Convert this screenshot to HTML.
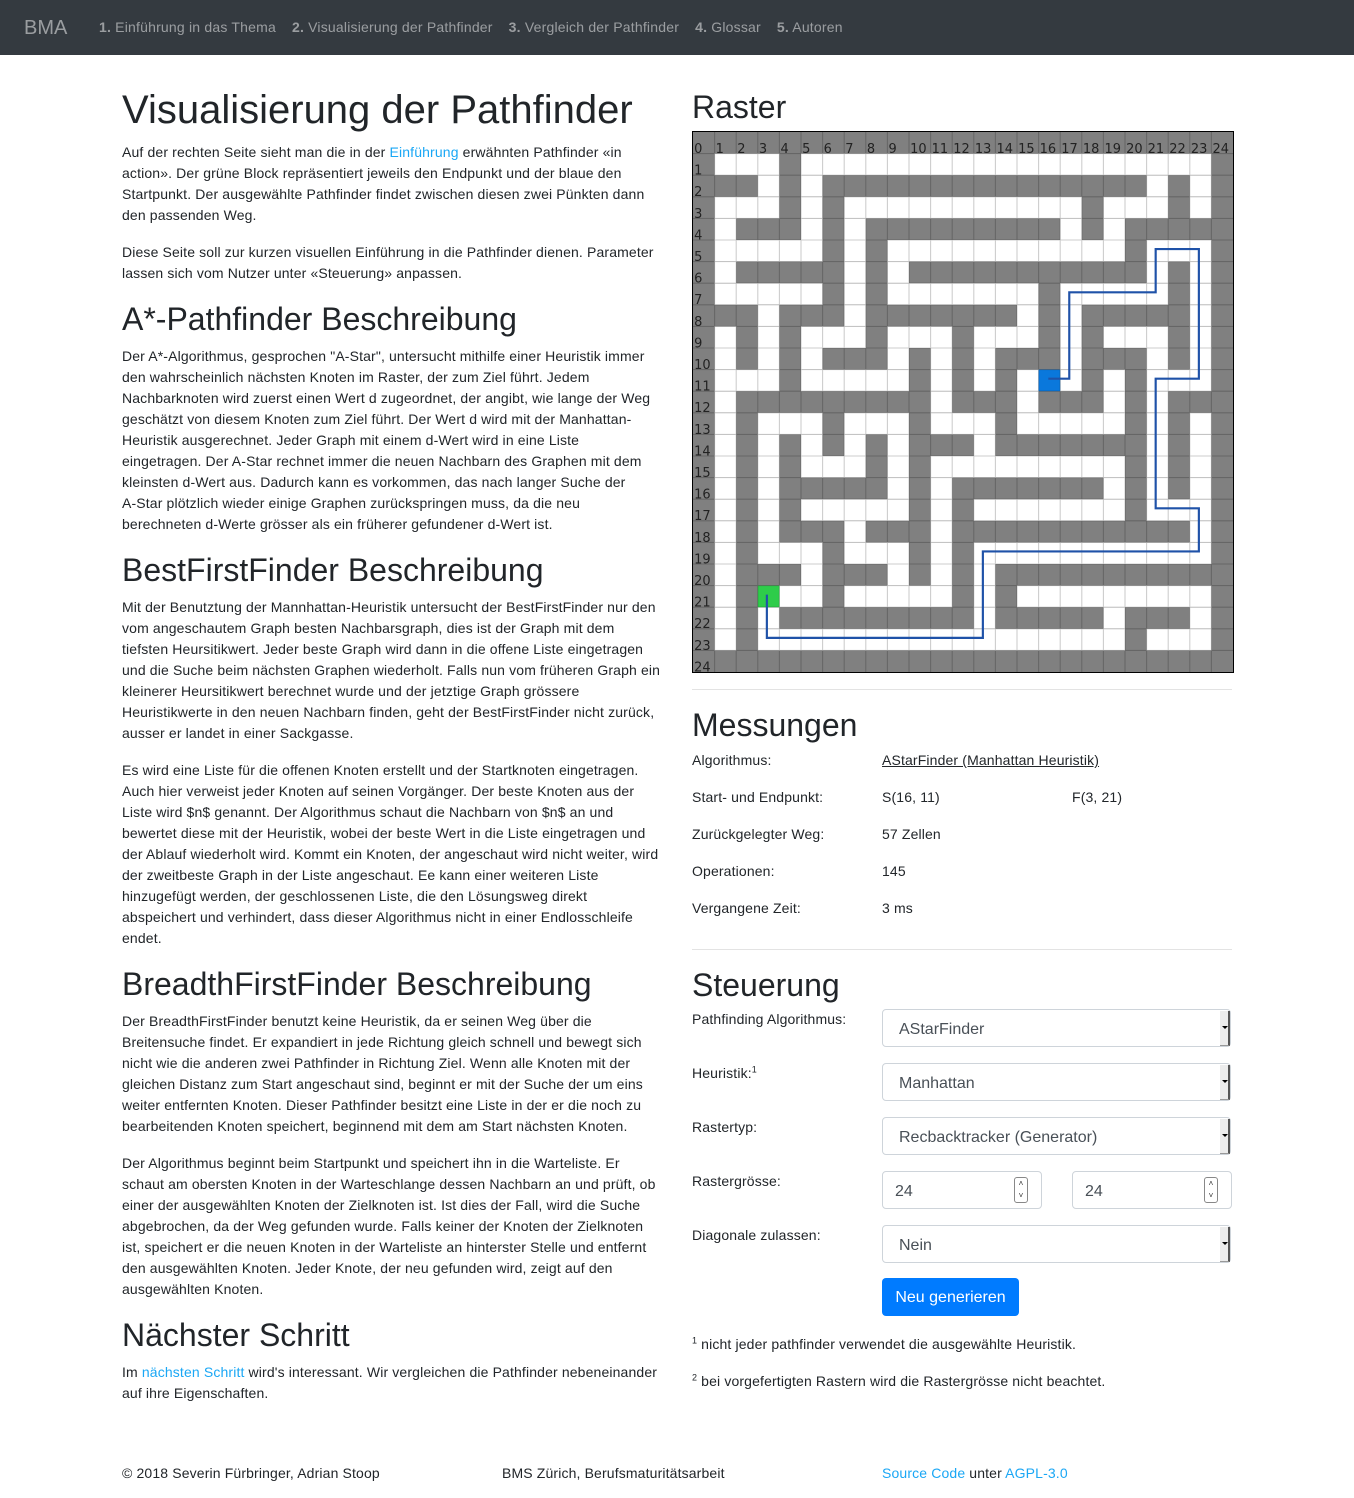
<!DOCTYPE html>
<html><head><meta charset="utf-8">
<style>
*{box-sizing:border-box}
body{margin:0;width:1354px;height:1498px;position:relative;font-family:"Liberation Sans",Arial,sans-serif;font-size:14px;line-height:21px;color:#212529;background:#fff;overflow:hidden}
a{color:#1aa7f5;text-decoration:none}
.nav{position:absolute;left:0;top:0;width:1354px;height:55px;background:#343a40}
.brand{position:absolute;left:24px;top:14px;font-size:20px;line-height:28px;color:rgba(255,255,255,.5)}
.links{position:absolute;left:91px;top:17px;color:rgba(255,255,255,.5);font-size:14px;white-space:nowrap;letter-spacing:0.2px}
.links span{padding:0 8px}
.left{position:absolute;left:122px;top:86px;width:560px}
h1{font-size:40px;line-height:48px;font-weight:400;margin:0 0 8px}
h2{font-size:32px;line-height:38px;font-weight:400;margin:0 0 8px}
p{margin:0 0 16px;white-space:nowrap;letter-spacing:0.14px}
.abs{position:absolute}
.hr{position:absolute;left:692px;width:540px;height:1px;background:#e3e3e3}
.sel{position:absolute;left:882px;width:349px;height:38px;border:1px solid #ced4da;border-radius:4px;font-size:16px;line-height:36px;padding-left:16px;padding-top:2px;color:#495057}
.sel:after{content:"";position:absolute;right:0;top:1px;width:8px;height:34px;background:#ececec;border-right:2px solid #555;border-bottom:1px solid #999}
.sel:before{content:"";position:absolute;right:2px;top:16px;border-left:3px solid transparent;border-right:3px solid transparent;border-top:3px solid #000;z-index:2}
.num{position:absolute;width:160px;height:38px;border:1px solid #ced4da;border-radius:4px;font-size:16px;line-height:36px;padding-left:12px;padding-top:2px;color:#495057}
.spin{position:absolute;right:13px;top:5px;width:14px;height:26px;border:1px solid #888;border-radius:3px;font-size:8px;line-height:12px;text-align:center;color:#333}
.lab{position:absolute;left:692px;letter-spacing:0.14px}
.r{letter-spacing:0.14px}
</style></head><body>
<div class="nav"><div class="brand">BMA</div>
<div class="links"><span><b>1.</b> Einführung in das Thema</span><span><b>2.</b> Visualisierung der Pathfinder</span><span><b>3.</b> Vergleich der Pathfinder</span><span><b>4.</b> Glossar</span><span><b>5.</b> Autoren</span></div></div>

<div class="left">
<h1>Visualisierung der Pathfinder</h1>
<p>Auf der rechten Seite sieht man die in der <a>Einführung</a> erwähnten Pathfinder «in<br>action». Der grüne Block repräsentiert jeweils den Endpunkt und der blaue den<br>Startpunkt. Der ausgewählte Pathfinder findet zwischen diesen zwei Pünkten dann<br>den passenden Weg.</p>
<p>Diese Seite soll zur kurzen visuellen Einführung in die Pathfinder dienen. Parameter<br>lassen sich vom Nutzer unter «Steuerung» anpassen.</p>
<h2>A*-Pathfinder Beschreibung</h2>
<p>Der A*-Algorithmus, gesprochen "A-Star", untersucht mithilfe einer Heuristik immer<br>den wahrscheinlich nächsten Knoten im Raster, der zum Ziel führt. Jedem<br>Nachbarknoten wird zuerst einen Wert d zugeordnet, der angibt, wie lange der Weg<br>geschätzt von diesem Knoten zum Ziel führt. Der Wert d wird mit der Manhattan-<br>Heuristik ausgerechnet. Jeder Graph mit einem d-Wert wird in eine Liste<br>eingetragen. Der A-Star rechnet immer die neuen Nachbarn des Graphen mit dem<br>kleinsten d-Wert aus. Dadurch kann es vorkommen, das nach langer Suche der<br>A-Star plötzlich wieder einige Graphen zurückspringen muss, da die neu<br>berechneten d-Werte grösser als ein früherer gefundener d-Wert ist.</p>
<h2>BestFirstFinder Beschreibung</h2>
<p>Mit der Benutztung der Mannhattan-Heuristik untersucht der BestFirstFinder nur den<br>vom angeschautem Graph besten Nachbarsgraph, dies ist der Graph mit dem<br>tiefsten Heursitikwert. Jeder beste Graph wird dann in die offene Liste eingetragen<br>und die Suche beim nächsten Graphen wiederholt. Falls nun vom früheren Graph ein<br>kleinerer Heursitikwert berechnet wurde und der jetztige Graph grössere<br>Heuristikwerte in den neuen Nachbarn finden, geht der BestFirstFinder nicht zurück,<br>ausser er landet in einer Sackgasse.</p>
<p>Es wird eine Liste für die offenen Knoten erstellt und der Startknoten eingetragen.<br>Auch hier verweist jeder Knoten auf seinen Vorgänger. Der beste Knoten aus der<br>Liste wird $n$ genannt. Der Algorithmus schaut die Nachbarn von $n$ an und<br>bewertet diese mit der Heuristik, wobei der beste Wert in die Liste eingetragen und<br>der Ablauf wiederholt wird. Kommt ein Knoten, der angeschaut wird nicht weiter, wird<br>der zweitbeste Graph in der Liste angeschaut. Ee kann einer weiteren Liste<br>hinzugefügt werden, der geschlossenen Liste, die den Lösungsweg direkt<br>abspeichert und verhindert, dass dieser Algorithmus nicht in einer Endlosschleife<br>endet.</p>
<h2>BreadthFirstFinder Beschreibung</h2>
<p>Der BreadthFirstFinder benutzt keine Heuristik, da er seinen Weg über die<br>Breitensuche findet. Er expandiert in jede Richtung gleich schnell und bewegt sich<br>nicht wie die anderen zwei Pathfinder in Richtung Ziel. Wenn alle Knoten mit der<br>gleichen Distanz zum Start angeschaut sind, beginnt er mit der Suche der um eins<br>weiter entfernten Knoten. Dieser Pathfinder besitzt eine Liste in der er die noch zu<br>bearbeitenden Knoten speichert, beginnend mit dem am Start nächsten Knoten.</p>
<p>Der Algorithmus beginnt beim Startpunkt und speichert ihn in die Warteliste. Er<br>schaut am obersten Knoten in der Warteschlange dessen Nachbarn an und prüft, ob<br>einer der ausgewählten Knoten der Zielknoten ist. Ist dies der Fall, wird die Suche<br>abgebrochen, da der Weg gefunden wurde. Falls keiner der Knoten der Zielknoten<br>ist, speichert er die neuen Knoten in der Warteliste an hinterster Stelle und entfernt<br>den ausgewählten Knoten. Jeder Knote, der neu gefunden wird, zeigt auf den<br>ausgewählten Knoten.</p>
<h2>Nächster Schritt</h2>
<p>Im <a>nächsten Schritt</a> wird's interessant. Wir vergleichen die Pathfinder nebeneinander<br>auf ihre Eigenschaften.</p>
</div>

<h2 class="abs" style="left:692px;top:88px">Raster</h2>
<div class="abs" style="left:692px;top:131px;width:542px;height:542px;border:1px solid #000">
<svg width="540" height="540" viewBox="0 0 25 25" style="display:block">
<rect x="0" y="0" width="25" height="25" fill="#808080"/>
<g fill="#fff">
<rect x="1" y="1" width="3" height="1"/><rect x="5" y="1" width="19" height="1"/>
<rect x="3" y="2" width="1" height="1"/><rect x="5" y="2" width="1" height="1"/><rect x="21" y="2" width="1" height="1"/><rect x="23" y="2" width="1" height="1"/>
<rect x="1" y="3" width="3" height="1"/><rect x="5" y="3" width="1" height="1"/><rect x="7" y="3" width="11" height="1"/><rect x="19" y="3" width="3" height="1"/><rect x="23" y="3" width="1" height="1"/>
<rect x="1" y="4" width="1" height="1"/><rect x="5" y="4" width="1" height="1"/><rect x="7" y="4" width="1" height="1"/><rect x="17" y="4" width="1" height="1"/><rect x="19" y="4" width="1" height="1"/>
<rect x="1" y="5" width="5" height="1"/><rect x="7" y="5" width="1" height="1"/><rect x="9" y="5" width="11" height="1"/><rect x="21" y="5" width="3" height="1"/>
<rect x="1" y="6" width="1" height="1"/><rect x="7" y="6" width="1" height="1"/><rect x="9" y="6" width="1" height="1"/><rect x="21" y="6" width="1" height="1"/><rect x="23" y="6" width="1" height="1"/>
<rect x="1" y="7" width="5" height="1"/><rect x="7" y="7" width="1" height="1"/><rect x="9" y="7" width="7" height="1"/><rect x="17" y="7" width="5" height="1"/><rect x="23" y="7" width="1" height="1"/>
<rect x="3" y="8" width="1" height="1"/><rect x="7" y="8" width="1" height="1"/><rect x="15" y="8" width="1" height="1"/><rect x="17" y="8" width="1" height="1"/><rect x="23" y="8" width="1" height="1"/>
<rect x="1" y="9" width="1" height="1"/><rect x="3" y="9" width="1" height="1"/><rect x="5" y="9" width="3" height="1"/><rect x="9" y="9" width="3" height="1"/><rect x="13" y="9" width="3" height="1"/><rect x="17" y="9" width="1" height="1"/><rect x="19" y="9" width="3" height="1"/><rect x="23" y="9" width="1" height="1"/>
<rect x="1" y="10" width="1" height="1"/><rect x="3" y="10" width="1" height="1"/><rect x="5" y="10" width="1" height="1"/><rect x="9" y="10" width="1" height="1"/><rect x="11" y="10" width="1" height="1"/><rect x="13" y="10" width="1" height="1"/><rect x="17" y="10" width="1" height="1"/><rect x="21" y="10" width="1" height="1"/><rect x="23" y="10" width="1" height="1"/>
<rect x="1" y="11" width="3" height="1"/><rect x="5" y="11" width="5" height="1"/><rect x="11" y="11" width="1" height="1"/><rect x="13" y="11" width="1" height="1"/><rect x="15" y="11" width="1" height="1"/><rect x="17" y="11" width="1" height="1"/><rect x="19" y="11" width="1" height="1"/><rect x="21" y="11" width="3" height="1"/>
<rect x="1" y="12" width="1" height="1"/><rect x="11" y="12" width="1" height="1"/><rect x="15" y="12" width="1" height="1"/><rect x="19" y="12" width="1" height="1"/><rect x="21" y="12" width="1" height="1"/>
<rect x="1" y="13" width="1" height="1"/><rect x="3" y="13" width="3" height="1"/><rect x="7" y="13" width="3" height="1"/><rect x="11" y="13" width="3" height="1"/><rect x="15" y="13" width="5" height="1"/><rect x="21" y="13" width="1" height="1"/><rect x="23" y="13" width="1" height="1"/>
<rect x="1" y="14" width="1" height="1"/><rect x="3" y="14" width="1" height="1"/><rect x="5" y="14" width="1" height="1"/><rect x="7" y="14" width="1" height="1"/><rect x="9" y="14" width="1" height="1"/><rect x="13" y="14" width="1" height="1"/><rect x="21" y="14" width="1" height="1"/><rect x="23" y="14" width="1" height="1"/>
<rect x="1" y="15" width="1" height="1"/><rect x="3" y="15" width="1" height="1"/><rect x="5" y="15" width="3" height="1"/><rect x="9" y="15" width="1" height="1"/><rect x="11" y="15" width="9" height="1"/><rect x="21" y="15" width="1" height="1"/><rect x="23" y="15" width="1" height="1"/>
<rect x="1" y="16" width="1" height="1"/><rect x="3" y="16" width="1" height="1"/><rect x="9" y="16" width="1" height="1"/><rect x="11" y="16" width="1" height="1"/><rect x="19" y="16" width="1" height="1"/><rect x="21" y="16" width="1" height="1"/><rect x="23" y="16" width="1" height="1"/>
<rect x="1" y="17" width="1" height="1"/><rect x="3" y="17" width="1" height="1"/><rect x="5" y="17" width="5" height="1"/><rect x="11" y="17" width="1" height="1"/><rect x="13" y="17" width="7" height="1"/><rect x="21" y="17" width="3" height="1"/>
<rect x="1" y="18" width="1" height="1"/><rect x="3" y="18" width="1" height="1"/><rect x="7" y="18" width="1" height="1"/><rect x="11" y="18" width="1" height="1"/><rect x="23" y="18" width="1" height="1"/>
<rect x="1" y="19" width="1" height="1"/><rect x="3" y="19" width="3" height="1"/><rect x="7" y="19" width="3" height="1"/><rect x="11" y="19" width="1" height="1"/><rect x="13" y="19" width="11" height="1"/>
<rect x="1" y="20" width="1" height="1"/><rect x="5" y="20" width="1" height="1"/><rect x="9" y="20" width="1" height="1"/><rect x="11" y="20" width="1" height="1"/><rect x="13" y="20" width="1" height="1"/>
<rect x="1" y="21" width="1" height="1"/><rect x="4" y="21" width="2" height="1"/><rect x="7" y="21" width="5" height="1"/><rect x="13" y="21" width="1" height="1"/><rect x="15" y="21" width="9" height="1"/>
<rect x="1" y="22" width="1" height="1"/><rect x="3" y="22" width="1" height="1"/><rect x="13" y="22" width="1" height="1"/><rect x="19" y="22" width="1" height="1"/><rect x="23" y="22" width="1" height="1"/>
<rect x="1" y="23" width="1" height="1"/><rect x="3" y="23" width="17" height="1"/><rect x="21" y="23" width="3" height="1"/>
</g>
<rect x="16" y="11" width="1" height="1" fill="#0a78dc"/>
<rect x="3" y="21" width="1" height="1" fill="#2ecc4a"/>
<path stroke="rgba(0,0,0,0.2)" stroke-width="0.05" fill="none" d="M1 0V25M2 0V25M3 0V25M4 0V25M5 0V25M6 0V25M7 0V25M8 0V25M9 0V25M10 0V25M11 0V25M12 0V25M13 0V25M14 0V25M15 0V25M16 0V25M17 0V25M18 0V25M19 0V25M20 0V25M21 0V25M22 0V25M23 0V25M24 0V25M0 1H25M0 2H25M0 3H25M0 4H25M0 5H25M0 6H25M0 7H25M0 8H25M0 9H25M0 10H25M0 11H25M0 12H25M0 13H25M0 14H25M0 15H25M0 16H25M0 17H25M0 18H25M0 19H25M0 20H25M0 21H25M0 22H25M0 23H25M0 24H25"/>
<polyline fill="none" stroke="#1f52a8" stroke-width="0.1" points="16.45,11.42 17.42,11.42 17.42,7.42 21.42,7.42 21.42,5.42 23.42,5.42 23.42,11.42 21.42,11.42 21.42,17.42 23.42,17.42 23.42,19.42 13.42,19.42 13.42,23.42 3.42,23.42 3.42,21.42"/>
<g font-family="DejaVu Sans,sans-serif" font-size="0.6" fill="#222">
<text x="0.05" y="0.97">0</text><text x="1.05" y="0.97">1</text><text x="2.05" y="0.97">2</text><text x="3.05" y="0.97">3</text><text x="4.05" y="0.97">4</text><text x="5.05" y="0.97">5</text><text x="6.05" y="0.97">6</text><text x="7.05" y="0.97">7</text><text x="8.05" y="0.97">8</text><text x="9.05" y="0.97">9</text><text x="10.05" y="0.97">10</text><text x="11.05" y="0.97">11</text><text x="12.05" y="0.97">12</text><text x="13.05" y="0.97">13</text><text x="14.05" y="0.97">14</text><text x="15.05" y="0.97">15</text><text x="16.05" y="0.97">16</text><text x="17.05" y="0.97">17</text><text x="18.05" y="0.97">18</text><text x="19.05" y="0.97">19</text><text x="20.05" y="0.97">20</text><text x="21.05" y="0.97">21</text><text x="22.05" y="0.97">22</text><text x="23.05" y="0.97">23</text><text x="24.05" y="0.97">24</text>
<text x="0.05" y="1.97">1</text><text x="0.05" y="2.97">2</text><text x="0.05" y="3.97">3</text><text x="0.05" y="4.97">4</text><text x="0.05" y="5.97">5</text><text x="0.05" y="6.97">6</text><text x="0.05" y="7.97">7</text><text x="0.05" y="8.97">8</text><text x="0.05" y="9.97">9</text><text x="0.05" y="10.97">10</text><text x="0.05" y="11.97">11</text><text x="0.05" y="12.97">12</text><text x="0.05" y="13.97">13</text><text x="0.05" y="14.97">14</text><text x="0.05" y="15.97">15</text><text x="0.05" y="16.97">16</text><text x="0.05" y="17.97">17</text><text x="0.05" y="18.97">18</text><text x="0.05" y="19.97">19</text><text x="0.05" y="20.97">20</text><text x="0.05" y="21.97">21</text><text x="0.05" y="22.97">22</text><text x="0.05" y="23.97">23</text><text x="0.05" y="24.97">24</text>
</g>
</svg></div>

<div class="hr" style="top:689px"></div>
<h2 class="abs" style="left:692px;top:706px">Messungen</h2>
<div class="lab" style="top:750px">Algorithmus:</div><div class="abs r" style="left:882px;top:750px;text-decoration:underline">AStarFinder (Manhattan Heuristik)</div>
<div class="lab" style="top:787px">Start- und Endpunkt:</div><div class="abs r" style="left:882px;top:787px">S(16, 11)</div><div class="abs r" style="left:1072px;top:787px">F(3, 21)</div>
<div class="lab" style="top:824px">Zurückgelegter Weg:</div><div class="abs r" style="left:882px;top:824px">57 Zellen</div>
<div class="lab" style="top:861px">Operationen:</div><div class="abs r" style="left:882px;top:861px">145</div>
<div class="lab" style="top:898px">Vergangene Zeit:</div><div class="abs r" style="left:882px;top:898px">3 ms</div>

<div class="hr" style="top:949px"></div>
<h2 class="abs" style="left:692px;top:966px">Steuerung</h2>
<div class="lab" style="top:1009px">Pathfinding Algorithmus:</div><div class="sel" style="top:1009px">AStarFinder</div>
<div class="lab" style="top:1063px">Heuristik:<sup style="font-size:9px;line-height:0">1</sup></div><div class="sel" style="top:1063px">Manhattan</div>
<div class="lab" style="top:1117px">Rastertyp:</div><div class="sel" style="top:1117px">Recbacktracker (Generator)</div>
<div class="lab" style="top:1171px">Rastergrösse:</div>
<div class="num" style="left:882px;top:1171px">24<div class="spin">˄<br>˅</div></div>
<div class="num" style="left:1072px;top:1171px">24<div class="spin">˄<br>˅</div></div>
<div class="lab" style="top:1225px">Diagonale zulassen:</div><div class="sel" style="top:1225px">Nein</div>
<div class="abs" style="left:882px;top:1278px;width:137px;height:38px;background:#007bff;border-radius:4px;color:#fff;font-size:16px;line-height:40px;text-align:center">Neu generieren</div>
<div class="lab" style="top:1334px"><sup style="font-size:9px;line-height:0">1</sup> nicht jeder pathfinder verwendet die ausgewählte Heuristik.</div>
<div class="lab" style="top:1371px"><sup style="font-size:9px;line-height:0">2</sup> bei vorgefertigten Rastern wird die Rastergrösse nicht beachtet.</div>

<div class="abs r" style="left:122px;top:1463px">© 2018 Severin Fürbringer, Adrian Stoop</div>
<div class="abs r" style="left:502px;top:1463px">BMS Zürich, Berufsmaturitätsarbeit</div>
<div class="abs r" style="left:882px;top:1463px"><a>Source Code</a> unter <a>AGPL-3.0</a></div>
</body></html>
